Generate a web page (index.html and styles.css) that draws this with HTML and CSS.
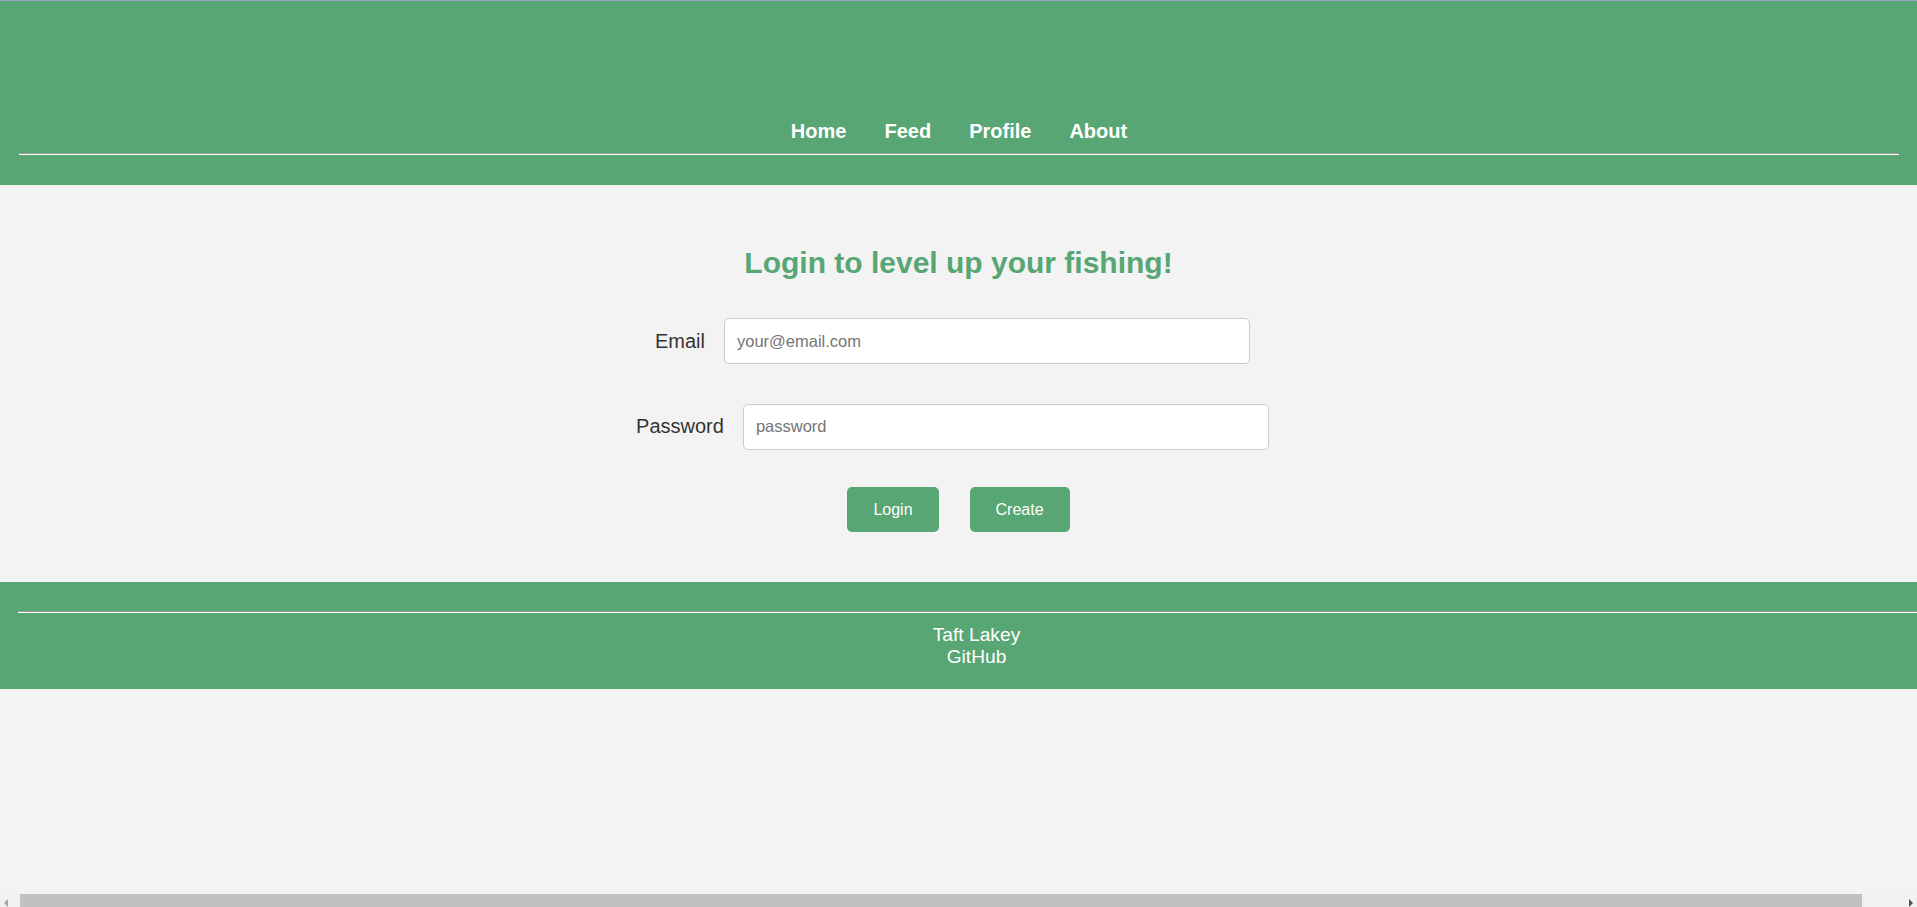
FILE: index.html
```html
<!DOCTYPE html>
<html lang="en">
<head>
<meta charset="utf-8">
<title>Login</title>
<link rel="stylesheet" href="styles.css">
</head>
<body>
<header class="site-header">
  <nav class="nav">
    <a class="nav-link" href="#">Home</a>
    <a class="nav-link" href="#">Feed</a>
    <a class="nav-link" href="#">Profile</a>
    <a class="nav-link" href="#">About</a>
  </nav>
  <hr class="rule">
</header>
<main class="main">
  <h2 class="title">Login to level up your fishing!</h2>
  <form class="login-form">
    <div class="field">
      <label class="field-label" for="email">Email</label>
      <input class="field-input" id="email" type="email" placeholder="your@email.com">
    </div>
    <div class="field">
      <label class="field-label" for="password">Password</label>
      <input class="field-input" id="password" type="password" placeholder="password">
    </div>
    <div class="actions">
      <button class="btn" type="button">Login</button>
      <button class="btn" type="button">Create</button>
    </div>
  </form>
</main>
<footer class="site-footer">
  <hr class="rule">
  <div class="footer-text">
    <div>Taft Lakey</div>
    <a class="footer-link" href="#">GitHub</a>
  </div>
</footer>
<div class="hscroll" aria-hidden="true">
  <span class="hscroll-btn"><span class="arrow arrow-left"></span></span>
  <span class="hscroll-track"><span class="hscroll-thumb"></span></span>
  <span class="hscroll-btn"><span class="arrow arrow-right"></span></span>
</div>
</body>
</html>
```
FILE: styles.css
```css
html, body {
  margin: 0;
  padding: 0;
}
body {
  background: #f3f3f3;
  font-family: "Liberation Sans", Arial, sans-serif;
  color: #333;
}
.site-header {
  background: #57a673;
  border-top: 1px solid #a2a6c6;
  padding: 119px 18px 30px 19px;
}
.nav {
  display: flex;
  justify-content: center;
  gap: 38px;
  line-height: 23px;
}
.nav-link {
  color: #fff;
  font-weight: bold;
  font-size: 20px;
  text-decoration: none;
}
.rule {
  margin: 0;
  height: 0;
  border: 0;
  border-top: 1px solid #9a9a9a;
  border-bottom: 1px solid #fff;
}
.site-header .rule {
  margin-top: 10px;
}
.main {
  padding: 61px 0 50px;
}
.title {
  margin: 0;
  text-align: center;
  color: #57a673;
  font-size: 30px;
  font-weight: bold;
  line-height: 34.5px;
}
.login-form {
  margin-top: 37.5px;
  display: flex;
  flex-direction: column;
  align-items: center;
}
.field {
  display: flex;
  align-items: center;
  gap: 19px;
  margin-bottom: 39.5px;
}
.field:nth-child(2) {
  margin-bottom: 37.5px;
}
.field-label {
  font-size: 20px;
  line-height: 23px;
  color: #333;
}
.field-input {
  box-sizing: border-box;
  width: 526px;
  height: 46px;
  margin: 0 12px 0 0;
  padding: 0 12px;
  border: 1px solid #cbcbcb;
  border-radius: 5px;
  background: #fff;
  font-family: "Liberation Sans", Arial, sans-serif;
  font-size: 16.5px;
  color: #333;
  outline: none;
}
.field-input::placeholder {
  color: #757575;
}
.actions {
  display: flex;
  gap: 31px;
}
.btn {
  height: 45px;
  padding: 0 26px;
  border: none;
  border-radius: 5px;
  background: #57a673;
  color: #fff;
  font-family: "Liberation Sans", Arial, sans-serif;
  font-size: 16px;
  cursor: pointer;
}
.site-footer {
  display: block;
  width: 100%;
  background: #57a673;
  padding: 29px 20px 21px 18px;
}
.footer-text {
  margin-top: 10.5px;
  text-align: center;
  color: #fff;
  font-size: 19.2px;
}
.footer-link {
  color: #fff;
  text-decoration: none;
}
/* simulated horizontal scrollbar overlay */
.hscroll {
  position: fixed;
  left: 0;
  right: 0;
  bottom: -4px;
  height: 17px;
  display: flex;
  background: #f1f1f1;
  z-index: 10;
}
.hscroll-btn {
  width: 17px;
  flex: none;
  display: flex;
  align-items: center;
  justify-content: center;
}
.hscroll-track {
  flex: 1;
  display: flex;
}
.hscroll-thumb {
  width: 1842px;
  margin-left: 3px;
  background: #c1c1c1;
}
.arrow {
  width: 0;
  height: 0;
  border-top: 4px solid transparent;
  border-bottom: 4px solid transparent;
}
.arrow-left {
  border-right: 4px solid #a3a3a3;
  margin-right: 6px;
}
.arrow-right {
  border-left: 4px solid #505050;
  margin-left: 5px;
}
```
